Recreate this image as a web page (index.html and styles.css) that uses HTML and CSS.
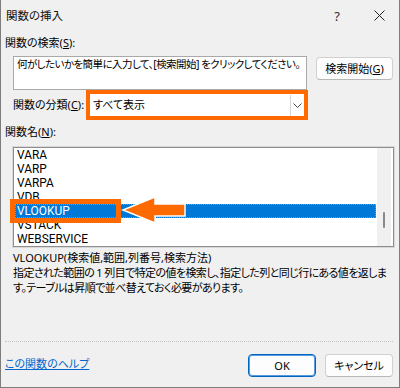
FILE: index.html
```html
<!DOCTYPE html>
<html lang="ja">
<head>
<meta charset="utf-8">
<title>関数の挿入</title>
<link rel="stylesheet" href="styles.css">
</head>
<body>
<div class="win">
  <div class="titlebar">
    <span class="title">関数の挿入</span>
    <span class="cap help">?</span>
    <span class="cap close"><svg width="11" height="11" viewBox="0 0 11 11"><path d="M0.5 0.5 L10.5 10.5 M10.5 0.5 L0.5 10.5" stroke="#222" stroke-width="1" fill="none"/></svg></span>
  </div>
  <div class="content">
    <div class="label l-search">関数の検索(<u>S</u>):</div>
    <div class="search-row">
      <div class="textbox">何がしたいかを簡単に入力して、[検索開始] をクリックしてください。</div>
      <div class="btn btn-search">検索開始(<u>G</u>)</div>
    </div>
    <div class="cat-row">
      <span class="cat-label">関数の分類(<u>C</u>):</span>
      <div class="hl-combo">
        <div class="combo">
          <span class="combo-text">すべて表示</span>
          <span class="dd"><svg width="9" height="5" viewBox="0 0 9 5"><path d="M0.5 0.5 L4.5 4.5 L8.5 0.5" stroke="#444" stroke-width="1" fill="none"/></svg></span>
        </div>
      </div>
    </div>
    <div class="label l-names">関数名(<u>N</u>):</div>
    <div class="listbox">
      <div class="items">
        <div class="item">VARA</div>
        <div class="item">VARP</div>
        <div class="item">VARPA</div>
        <div class="item">VDB</div>
        <div class="item sel">VLOOKUP</div>
        <div class="item">VSTACK</div>
        <div class="item">WEBSERVICE</div>
      </div>
      <div class="scroll"><div class="thumb"></div></div>
      <div class="hl-item"></div>
      <svg class="arrow" width="72" height="30" viewBox="0 0 72 30"><polygon points="5,15 37,2 37,9 67,9 67,21 37,21 37,28" fill="#ff6a00" stroke="#ffffff" stroke-width="1.5" stroke-linejoin="miter"/></svg>
    </div>
    <div class="syntax">VLOOKUP(検索値,範囲,列番号,検索方法)</div>
    <div class="desc">指定された範囲の 1 列目で特定の値を検索し、指定した列と同じ行にある値を返しま<br>す。テーブルは昇順で並べ替えておく必要があります。</div>
  </div>
  <div class="sep"></div>
  <div class="footer">
    <a class="helplink" href="#">この関数のヘルプ</a>
    <div class="btns">
      <div class="btn btn-ok">OK</div>
      <div class="btn btn-cancel">キャンセル</div>
    </div>
  </div>
</div>
</body>
</html>
```

FILE: styles.css
```css
body {
  margin: 0;
  font-family: "Noto Sans", "Noto Sans CJK JP", sans-serif;
  font-size: 11px;
  color: #000;
  font-feature-settings: "palt";
  background: #f0f0f0;
}

.win {
  width: 400px;
  height: 388px;
  box-sizing: border-box;
  background: #f0f0f0;
  border: 1px solid #7d7d7d;
  border-top: none;
  display: flex;
  flex-direction: column;
}

u { text-decoration: underline; text-underline-offset: 1px; }

.titlebar {
  height: 31px;
  display: flex;
  align-items: center;
  padding: 0 10px 0 5px;
  line-height: 16px;
}

.title { font-size: 11.5px; color: #111; }

.cap {
  width: 20px;
  height: 20px;
  display: flex;
  align-items: center;
  justify-content: center;
}

.help {
  margin-left: auto;
  font-size: 13px;
  color: #333;
}

.close { margin-left: 22px; }

.content {
  padding: 0 6px 0 4px;
  display: flex;
  flex-direction: column;
}

.label { line-height: 16px; }
.l-search { margin-top: 4px; }

.search-row {
  display: flex;
  align-items: flex-start;
  margin-top: 5px;
  padding-left: 8px;
}

.textbox {
  width: 294px;
  height: 34px;
  box-sizing: border-box;
  background: #fff;
  border: 1px solid #a9a9a9;
  padding: 1px 3px;
  line-height: 13px;
  font-size: 10.5px;
  white-space: nowrap;
  letter-spacing: -0.55px;
}

.btn {
  box-sizing: border-box;
  display: flex;
  align-items: center;
  justify-content: center;
  background: #fdfdfd;
  border: 1px solid #d0d0d0;
  border-bottom-color: #b8b8b8;
  border-radius: 4px;
  line-height: 14px;
}

.btn-search {
  width: 77px;
  height: 23px;
  margin-left: 9px;
  margin-top: 1px;
}

.cat-row {
  display: flex;
  align-items: center;
  padding-left: 8px;
  height: 30px;
}

.cat-label { width: 73px; line-height: 16px; }

.hl-combo {
  width: 222px;
  height: 30px;
  box-sizing: border-box;
  border: 4px solid #ff6a00;
}

.combo {
  height: 22px;
  background: #fff;
  display: flex;
  align-items: center;
}

.combo-text { padding-left: 3px; flex: 1; line-height: 16px; }

.dd {
  width: 13px;
  height: 21px;
  box-sizing: border-box;
  border-left: 1px solid #d6d6d6;
  display: flex;
  align-items: center;
  justify-content: center;
  margin-right: 1px;
}

.l-names { margin-top: 4px; }

.listbox {
  position: relative;
  margin-top: 7px;
  margin-left: 8px;
  width: 381px;
  height: 100px;
  box-sizing: border-box;
  background: #fff;
  border: 1px solid #8e8e8e;
  box-shadow: 0 0 0 1px #d8d8d8;
  padding: 0 1px 0 1px;
  display: flex;
}

.items {
  width: 361px;
  font-family: Roboto, "Noto Sans", sans-serif;
  font-size: 11.9px;
}

.item {
  height: 14px;
  line-height: 14px;
  padding-left: 2px;
  box-sizing: border-box;
  white-space: nowrap;
}

.item.sel {
  background: #0078d7;
  color: #fff;
  outline: 1px dotted #c08a50;
  outline-offset: -1px;
}

.scroll {
  width: 14px;
  margin-left: 1px;
  background: #f0f0f0;
  position: relative;
}

.thumb {
  position: absolute;
  left: 6px;
  top: 64px;
  width: 2px;
  height: 16px;
  border-radius: 1px;
  background: #8a8a8a;
}

.hl-item {
  position: absolute;
  left: -4px;
  top: 51px;
  width: 111px;
  height: 24px;
  box-sizing: border-box;
  border: 5px solid #ff6a00;
}

.arrow {
  position: absolute;
  left: 104px;
  top: 47px;
}

.syntax {
  margin-top: 3px;
  padding-left: 8px;
  line-height: 15px;
  white-space: nowrap;
}

.desc {
  padding-left: 8px;
  line-height: 15px;
  white-space: nowrap;
  letter-spacing: -0.6px;
}

.sep {
  margin: 46px 6px 0 4px;
  border-top: 1px dotted #c4c4c4;
}

.footer {
  display: flex;
  align-items: flex-start;
  padding: 12px 6px 0 4px;
}

.helplink {
  color: #0066cc;
  text-decoration: underline;
  line-height: 16px;
  margin-top: 2px;
}

.btns {
  margin-left: auto;
  display: flex;
  gap: 9px;
}

.btn-ok {
  width: 68px;
  height: 23px;
  border: 1px solid #0067c0;
  box-shadow: inset 0 0 0 1px #5a9be0;
}

.btn-cancel {
  width: 68px;
  height: 23px;
}
```
